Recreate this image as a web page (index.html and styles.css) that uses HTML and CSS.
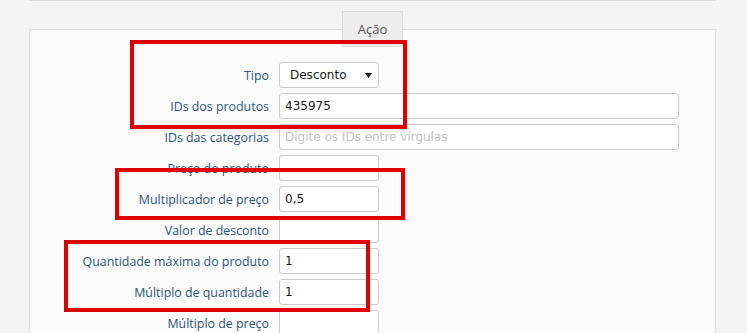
FILE: index.html
```html
<!DOCTYPE html>
<html lang="pt">
<head>
<meta charset="utf-8">
<title>Ação</title>
<link rel="stylesheet" href="styles.css">
</head>
<body>
<div class="page">
  <div class="prev"></div>
  <div class="tabrow"><div class="tab">Ação</div></div>
  <div class="panel">
    <div class="form">
      <label class="lbl">Tipo</label>
      <div class="field short select"><span>Desconto</span><svg class="arrow" width="7" height="5" viewBox="0 0 7 5"><path d="M0 0H7L3.5 5Z" fill="#111"/></svg></div>

      <label class="lbl">IDs dos produtos</label>
      <div class="field wide">435975</div>

      <label class="lbl">IDs das categorias</label>
      <div class="field wide placeholder">Digite os IDs entre vírgulas</div>

      <label class="lbl">Preço do produto</label>
      <div class="field short"></div>

      <label class="lbl">Multiplicador de preço</label>
      <div class="field short">0,5</div>

      <label class="lbl">Valor de desconto</label>
      <div class="field short"></div>

      <label class="lbl">Quantidade máxima do produto</label>
      <div class="field short">1</div>

      <label class="lbl">Múltiplo de quantidade</label>
      <div class="field short">1</div>

      <label class="lbl">Múltiplo de preço</label>
      <div class="field short"></div>
    </div>
  </div>
  <div class="mark mark1"></div>
  <div class="mark mark2"></div>
  <div class="mark mark3"></div>
</div>
</body>
</html>
```

FILE: styles.css
```css
html, body {
  margin: 0;
  padding: 0;
  background: #f4f4f4;
  font-family: "Open Sans", "DejaVu Sans", sans-serif;
  overflow: hidden;
}
.page {
  position: relative;
  padding: 0 31px 0 29px;
  height: 333px;
}
.prev {
  border-top: 1px solid #dddddd;
}
.tabrow {
  display: flex;
  justify-content: center;
  margin-top: 10px;
  margin-bottom: -18px;
  position: relative;
  z-index: 1;
}
.tab {
  box-sizing: border-box;
  height: 36px;
  padding: 0 15px;
  line-height: 34px;
  border: 1px solid #dddddd;
  background: #eeeeee;
  color: #555555;
  font-size: 13px;
}
.panel {
  border: 1px solid #dddddd;
  background: #fbfbfb;
  padding: 32px 37px 60px 0;
}
.form {
  display: grid;
  grid-template-columns: 239px auto;
  column-gap: 10px;
  row-gap: 5px;
  align-items: center;
  justify-items: start;
}
.lbl {
  justify-self: end;
  font-size: 12.4px;
  color: #2c5678;
  white-space: nowrap;
}
.field {
  box-sizing: border-box;
  height: 26px;
  border: 1px solid #cccccc;
  border-radius: 3px;
  background: #ffffff;
  padding: 0 5px;
  line-height: 24px;
  font-family: "DejaVu Sans", sans-serif;
  font-size: 12px;
  color: #1a1a1a;
  white-space: nowrap;
}
.short { width: 100px; }
.wide { width: 400px; }
.placeholder { color: #c4c4c4; }
.select {
  display: flex;
  align-items: center;
  justify-content: space-between;
  padding: 0 6px 0 10px;
}
.mark {
  position: absolute;
  box-sizing: border-box;
  border: 4px solid #e00000;
  z-index: 2;
}
.mark1 { left: 130px; top: 40px; width: 277px; height: 89px; }
.mark2 { left: 115px; top: 168px; width: 290px; height: 52px; }
.mark3 { left: 64px; top: 240px; width: 306px; height: 72px; }
```
